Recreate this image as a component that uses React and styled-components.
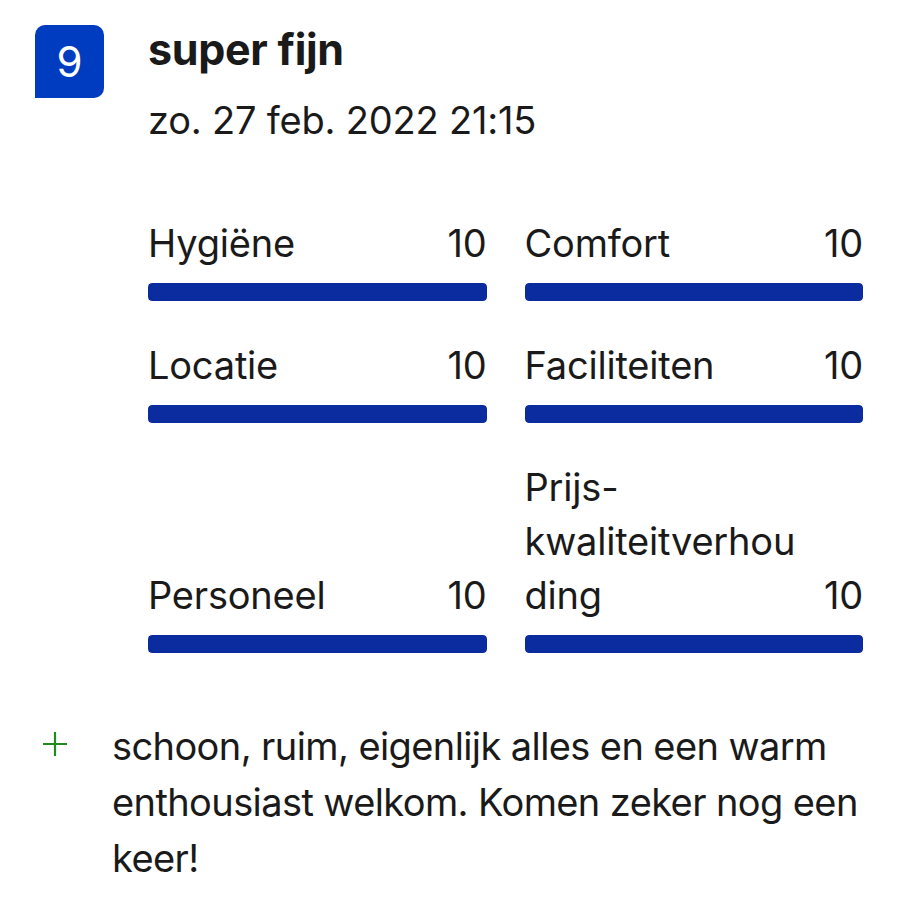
import React from "react";
import styled, { createGlobalStyle } from "styled-components";

const Global = createGlobalStyle`
  html, body { margin: 0; padding: 0; background: #ffffff; }
  body { font-family: Inter, "Noto Sans", "Liberation Sans", sans-serif; color: #1a1a1a; }
`;

const Page = styled.div`
  width: 900px;
  padding: 25px 0 0 35px;
  box-sizing: border-box;
`;

const Header = styled.div`
  display: flex;
  align-items: flex-start;
  gap: 44px;
`;

const Badge = styled.div`
  width: 69px;
  height: 73px;
  flex: none;
  background: #003cc0;
  color: #fff;
  border-radius: 10px 10px 10px 0;
  display: flex;
  align-items: center;
  justify-content: center;
  font-size: 42px;
  font-weight: 400;
`;

const Main = styled.div`
  width: 715px;
  display: flex;
  flex-direction: column;
`;

const Title = styled.div`
  font-size: 43px;
  font-weight: 700;
  line-height: 54px;
  margin-top: -3px;
  letter-spacing: -0.3px;
`;

const DateLine = styled.div`
  font-size: 38px;
  line-height: 54px;
  margin-top: 17px;
  letter-spacing: -0.2px;
`;

const Scores = styled.div`
  display: grid;
  grid-template-columns: 1fr 1fr;
  column-gap: 38px;
  row-gap: 37px;
  margin-top: 69px;
`;

const Cell = styled.div`
  display: flex;
  flex-direction: column;
  justify-content: flex-end;
`;

const LabelRow = styled.div`
  display: flex;
  justify-content: space-between;
  align-items: flex-end;
  gap: 12px;
  font-size: 38px;
  line-height: 54px;
  letter-spacing: -0.2px;
`;

const Label = styled.span`
  min-width: 0;
`;

const Value = styled.span`
  flex: none;
`;

const Bar = styled.div`
  height: 18px;
  margin-top: 13px;
  border-radius: 4px;
  background: #e6e6e6;
  overflow: hidden;
`;

const Fill = styled.div`
  height: 100%;
  background: #0a2c9e;
  border-radius: 4px;
`;

const Pro = styled.div`
  display: flex;
  align-items: flex-start;
  gap: 44px;
  margin-top: 65px;
  padding-left: 7px;
`;

const PlusIcon = styled.svg`
  flex: none;
  width: 26px;
  height: 26px;
  margin-top: 13px;
`;

const ProText = styled.div`
  width: 760px;
  font-size: 38px;
  line-height: 56px;
  letter-spacing: -0.6px;
`;

const scores = [
  { label: "Hygiëne", value: 10 },
  { label: "Comfort", value: 10 },
  { label: "Locatie", value: 10 },
  { label: "Faciliteiten", value: 10 },
  { label: "Personeel", value: 10 },
  {
    label: (
      <>
        Prijs-kwaliteitverhou<wbr />ding
      </>
    ),
    value: 10,
  },
];

export default function App() {
  return (
    <>
      <Global />
      <Page>
        <Header>
          <Badge>9</Badge>
          <Main>
            <Title>super fijn</Title>
            <DateLine>zo. 27 feb. 2022 21:15</DateLine>
            <Scores>
              {scores.map((s, i) => (
                <Cell key={i}>
                  <LabelRow>
                    <Label>{s.label}</Label>
                    <Value>{s.value}</Value>
                  </LabelRow>
                  <Bar>
                    <Fill style={{ width: `${s.value * 10}%` }} />
                  </Bar>
                </Cell>
              ))}
            </Scores>
          </Main>
        </Header>
        <Pro>
          <PlusIcon viewBox="0 0 26 26">
            <path d="M13 1v24M1 13h24" stroke="#1f8a1f" strokeWidth="2.2" fill="none" />
          </PlusIcon>
          <ProText>
            schoon, ruim, eigenlijk alles en een warm enthousiast welkom. Komen zeker nog een keer!
          </ProText>
        </Pro>
      </Page>
    </>
  );
}
